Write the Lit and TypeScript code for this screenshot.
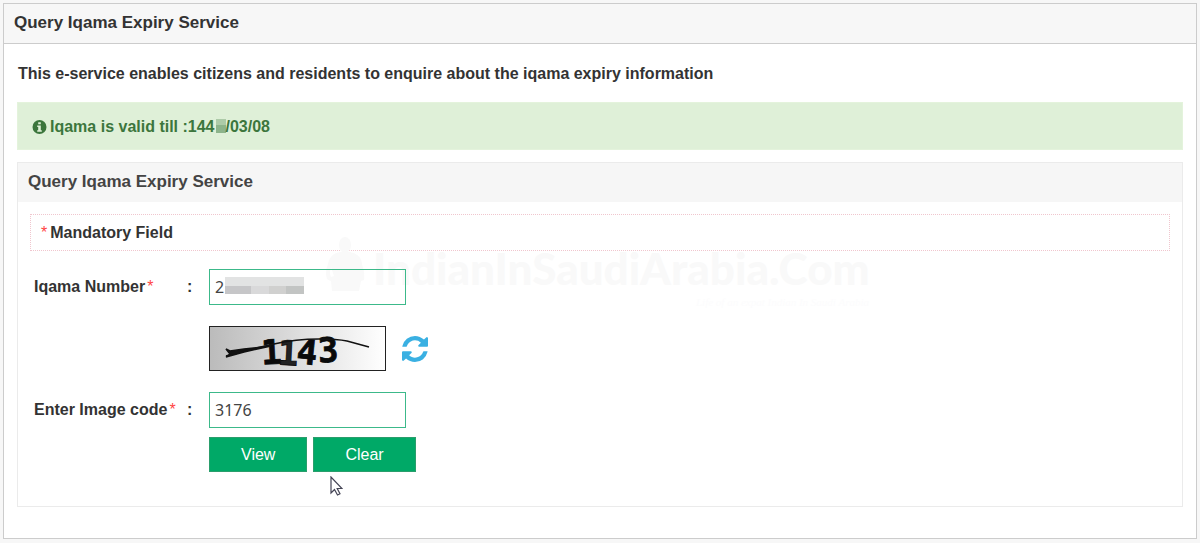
import { LitElement, html, css } from "lit";
import { customElement, state } from "lit/decorators.js";

@customElement("app-root")
export class AppRoot extends LitElement {
  @state() private iqama = "2";
  @state() private code = "3176";

  static styles = css`
    :host {
      display: block;
      min-height: 100vh;
      box-sizing: border-box;
      padding: 3px 3px 4px;
      background: #f7f7f7;
      color: #333;
      font: bold 16px/20px "Liberation Sans", Arial, sans-serif;
    }
    h1, h2, p { margin: 0; font-size: inherit; }
    .page { border: 1px solid #ccc; background: #fff; padding-bottom: 31px; }
    .page-head {
      padding: 9px 10px 10px;
      border-bottom: 1px solid #ccc;
      background: #f7f7f7;
      font-size: 17px;
      line-height: 20px;
    }
    .intro { padding: 20px 14px 18px; }
    .notice {
      display: flex;
      align-items: center;
      gap: 3px;
      margin: 0 13px;
      padding: 15px 14px 13px;
      background: #dff0d8;
      color: #3c763d;
      border: 1px solid #e4f3dc;
      line-height: 18px;
    }
    .info { width: 15px; height: 15px; }
    .masked { display: inline-block; width: 10px; height: 14px; margin-left: 1px; vertical-align: -1px; background: linear-gradient(#adcba8 40%, #8db48b 40%); }
    .panel { position: relative; margin: 12px 13px 0; border: 1px solid #ebebeb; padding-bottom: 34px; }
    .panel-head { padding: 9px 10px 10px; background: #f6f6f6; color: #444; font-size: 17px; }
    .mandatory { display: flex; gap: 3px; margin: 12px 12px 18px; padding: 8px 10px; border: 1px dotted #f0c6ce; line-height: 19px; }
    .star { color: #f44; font-weight: 400; }
    label .star { margin-left: 2px; }
    .row { display: grid; grid-template-columns: 153px 22px 1fr; align-items: center; padding-left: 16px; }
    .field { position: relative; width: 197px; }
    input {
      display: block;
      box-sizing: border-box;
      width: 100%;
      height: 36px;
      padding: 0 5px;
      border: 1px solid #3cb98a;
      border-radius: 0;
      background: transparent;
      color: #444;
      font: 16px "Noto Sans", sans-serif;
    }
    .blur { position: absolute; left: 16px; top: 8px; width: 79px; height: 17px; }
    .captcha { display: flex; align-items: center; gap: 16px; padding: 21px 0 21px 191px; }
    .picture { display: block; width: 177px; height: 45px; overflow: visible; }
    .refresh { padding: 0; border: 0; background: none; width: 26px; height: 26px; }
    .refresh svg { display: block; width: 26px; height: 26px; }
    .actions { display: flex; gap: 6px; padding: 9px 0 0 191px; }
    .btn {
      height: 35px;
      padding: 0 31px;
      border: 1px solid #2a9e6c;
      background: #00a967;
      color: #fff;
      font: 16px "Liberation Sans", Arial, sans-serif;
    }
    .mark { position: absolute; left: 307px; top: 73px; width: 560px; height: 74px; pointer-events: none; }
    .pointer { position: absolute; left: 312px; top: 313px; width: 13px; height: 20px; pointer-events: none; }
  `;

  render() {
    return html`
      <main class="page">
        <h1 class="page-head">Query Iqama Expiry Service</h1>
        <p class="intro">This e-service enables citizens and residents to enquire about the iqama expiry information</p>
        <div class="notice" role="status">
          <svg class="info" viewBox="0 0 15 15" aria-hidden="true">
            <circle cx="7.5" cy="7" r="7" fill="#3c763d" />
            <path d="M6.2 2.200h2.600v2H6.200zM5.200 5.600h3.600v4.600h1v1.600H5.200v-1.600h1V7.100h-1z" fill="#dff0d8" />
          </svg>
          <span>Iqama is valid till :144<span class="masked"></span>/03/08</span>
        </div>
        <section class="panel">
          <svg class="mark" viewBox="0 0 560 74" aria-hidden="true">
            <g fill="#f9f9f9">
              <ellipse cx="20" cy="9" rx="6" ry="8" />
              <path d="M16 16h9q11 2 12 12 3 8 2 16l-3 1-2 10H7l-1-10q-5-1-5-7 0-6 2-10Q5 17 16 16zM6 31q-2 6 0 10l3-1z" fill-rule="evenodd" />
              <text x="48" y="49" font-family="Lato" font-weight="900" font-size="44">IndianInSaudiArabia.Com</text>
            </g>
            <text x="371" y="70" fill="#fcfcfd" font-family="Liberation Serif" font-style="italic" font-weight="400" font-size="11">Life of an expat Indian In Saudi Arabia</text>
          </svg>
          <h2 class="panel-head">Query Iqama Expiry Service</h2>
          <p class="mandatory"><span class="star">*</span><span>Mandatory Field</span></p>
          <form @submit=${(e: Event) => e.preventDefault()}>
            <div class="row">
              <label for="iqama">Iqama Number<span class="star">*</span></label>
              <span>:</span>
              <div class="field">
                <input id="iqama" .value=${this.iqama} @input=${(e: InputEvent) => (this.iqama = (e.target as HTMLInputElement).value)} />
                <svg class="blur" viewBox="0 0 79 17" preserveAspectRatio="none" aria-hidden="true">
                  <path fill="#e2e3e3" d="M0 0h79v9H0z" /><path fill="#c6c6c8" d="M0 9h26v8H0z" />
                  <path fill="#d9d9da" d="M26 9h18v8H26z" /><path fill="#d0d0cf" d="M44 9h17v8H44z" /><path fill="#c2c4c3" d="M61 9h18v8H61z" />
                </svg>
              </div>
            </div>
            <div class="captcha">
              <svg class="picture" viewBox="0 0 177 45" role="img" aria-label="Image code">
                <defs><linearGradient id="g"><stop stop-color="#bbb" /><stop offset="1" stop-color="#fff" /></linearGradient></defs>
                <rect x=".5" y=".5" width="176" height="44" fill="url(#g)" stroke="#222" />
                <g fill="#0a0a0a" stroke="#0a0a0a" stroke-width=".8" font-family="DejaVu Sans Mono" font-weight="700" font-size="34">
                  <text x="52" y="38" transform="rotate(-3 62 26)">1</text>
                  <text x="69" y="39" transform="rotate(3 79 26)" fill="#222">1</text>
                  <text x="88" y="38" transform="rotate(6 98 26)">4</text>
                  <text x="109" y="36" transform="rotate(-3 119 26)">3</text>
                </g>
                <path d="M17 30q25-7 48-12 22-5 45-5 18 0 28 2l22 6" fill="none" stroke="#111" stroke-width="1.700" />
                <path d="M17 31l18-5 27-6-27 3-14 2-4-2 4 5z" fill="#111" stroke="#111" stroke-width="1.500" />
              </svg>
              <button class="refresh" type="button" aria-label="Refresh image code">
                <svg viewBox="0 0 1536 1536" fill="#3ab0e2" aria-hidden="true">
                  <path d="M1511 928q0 5-1 7-64 268-268 434.500T764 1536q-146 0-282.500-55T238 1324l-129 129q-19 19-45 19t-45-19-19-45V960q0-26 19-45t45-19h448q26 0 45 19t19 45-19 45l-137 137q71 66 161 102t187 36q134 0 250-65t186-179q11-17 53-117 8-23 30-23h192q13 0 22.500 9.500t9.500 22.500zm25-800v448q0 26-19 45t-45 19h-448q-26 0-45-19t-19-45 19-45l138-138Q969 256 768 256q-134 0-250 65T332 500q-11 17-53 117-8 23-30 23H50q-13 0-22.500-9.500T18 608v-7q65-268 270-434.500T768 0q146 0 284 55.500T1297 212l130-129q19-19 45-19t45 19 19 45z" />
                </svg>
              </button>
            </div>
            <div class="row">
              <label for="code">Enter Image code<span class="star">*</span></label>
              <span>:</span>
              <div class="field">
                <input id="code" .value=${this.code} @input=${(e: InputEvent) => (this.code = (e.target as HTMLInputElement).value)} />
              </div>
            </div>
            <div class="actions">
              <button class="btn" type="submit">View</button>
              <button class="btn" type="reset">Clear</button>
            </div>
          </form>
          <svg class="pointer" viewBox="0 0 13 20" aria-hidden="true">
            <path d="M1 1v16l3.500-3.500 3 5.500 2.500-1.300-2.800-5.200H12z" fill="#fff" stroke="#445" stroke-width="1.200" />
          </svg>
        </section>
      </main>
    `;
  }
}
